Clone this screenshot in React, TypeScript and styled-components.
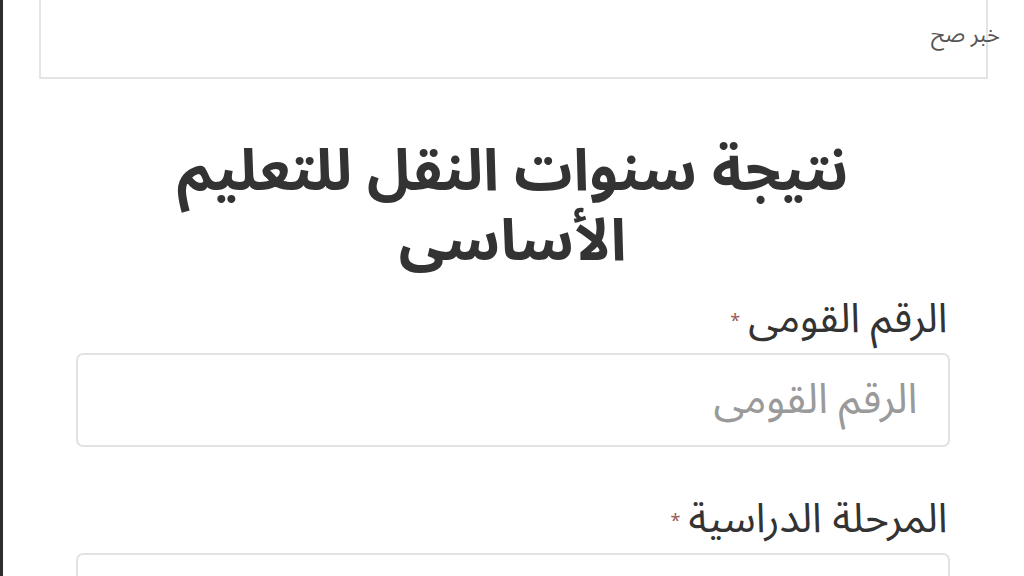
import styled, { createGlobalStyle } from "styled-components"

const Global = createGlobalStyle`
  html, body { margin: 0; padding: 0; background: #fff; }
  body { overflow: hidden; }
`

const arabic = `"Noto Sans Arabic", "DejaVu Sans", "Noto Sans", sans-serif`

const Page = styled.div`
  position: relative;
  width: 1024px;
  height: 576px;
  overflow: hidden;
  border-left: 3px solid #2e2e2e;
  box-sizing: border-box;
  direction: rtl;
  font-family: ${arabic};
`

const TopBox = styled.div`
  width: 949px;
  height: 79px;
  margin-right: 36px;
  box-sizing: border-box;
  border: 2px solid #e4e4e4;
  border-top: none;
`

const Watermark = styled.span`
  position: absolute;
  top: 12px;
  right: 24px;
  font-size: 22px;
  color: #555;
  font-family: ${arabic};
`

const Form = styled.div`
  width: 874px;
  margin: 0 auto;
  padding-top: 58px;
  box-sizing: border-box;
  transform: translateX(-1px);
`

const Title = styled.h1`
  margin: 0 0 22px;
  text-align: center;
  font-size: 58px;
  line-height: 70px;
  font-weight: 700;
  color: #333;
`

const Label = styled.label`
  display: block;
  font-size: 41px;
  line-height: 40px;
  color: #333;
  margin-bottom: 12px;
  padding-right: 2px;
`

const Star = styled.span`
  color: #9b5a5a;
  font-size: 18px;
  margin-right: 8px;
  vertical-align: middle;
`

const Field = styled.div<{ $gap?: number }>`
  height: 94px;
  box-sizing: border-box;
  border: 2px solid #e2e2e2;
  border-radius: 7px;
  display: flex;
  align-items: center;
  padding-right: 30px;
  margin-bottom: ${(p) => p.$gap ?? 0}px;
`

const Placeholder = styled.span`
  font-size: 42px;
  line-height: 40px;
  color: #9a9a9a;
`

const App = () => {
  return (
    <>
      <Global />
      <Page>
        <TopBox />
        <Watermark>خبر صح</Watermark>
        <Form>
          <Title>
            نتيجة سنوات النقل للتعليم
            <br />
            الأساسى
          </Title>
          <Label>
            الرقم القومى<Star>*</Star>
          </Label>
          <Field $gap={52}>
            <Placeholder>الرقم القومى</Placeholder>
          </Field>
          <Label>
            المرحلة الدراسية<Star>*</Star>
          </Label>
          <Field />
        </Form>
      </Page>
    </>
  )
}

export default App
